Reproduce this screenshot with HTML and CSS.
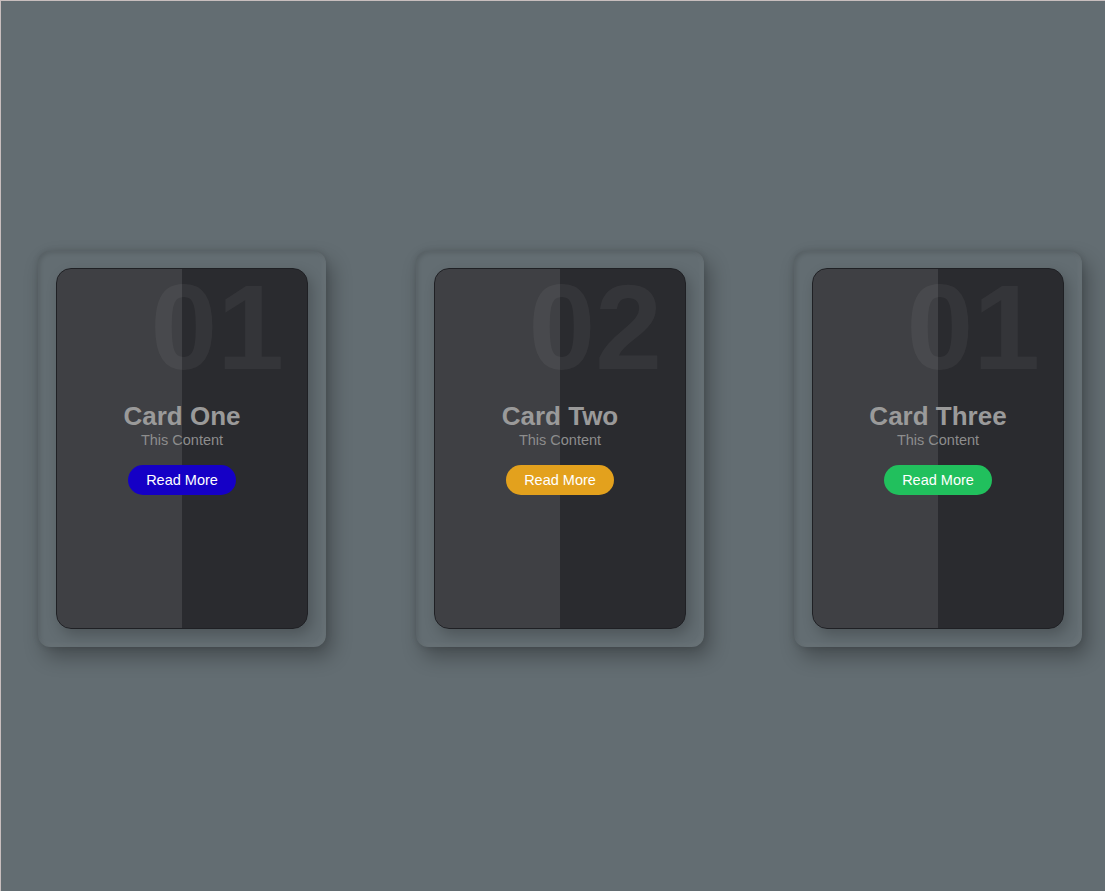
FILE: index.html
```html
<!DOCTYPE html>
<html lang="en">
<head>
<meta charset="UTF-8">
<title>Cards</title>
<link rel="stylesheet" href="styles.css">
</head>
<body>
<main class="page">
  <div class="frame">
    <div class="card">
      <span class="num">01</span>
      <h3 class="title">Card One</h3>
      <p class="sub">This Content</p>
      <a class="btn btn-blue" href="#">Read More</a>
    </div>
  </div>
  <div class="frame">
    <div class="card">
      <span class="num">02</span>
      <h3 class="title">Card Two</h3>
      <p class="sub">This Content</p>
      <a class="btn btn-orange" href="#">Read More</a>
    </div>
  </div>
  <div class="frame">
    <div class="card">
      <span class="num">01</span>
      <h3 class="title">Card Three</h3>
      <p class="sub">This Content</p>
      <a class="btn btn-green" href="#">Read More</a>
    </div>
  </div>
</main>
</body>
</html>
```

FILE: styles.css
```css
html {
  background: #636d72;
  border-left: 1px solid #c8bebe;
  border-top: 1px solid #c8bebe;
}
body {
  margin: 0;
  font-family: "Liberation Sans", Arial, sans-serif;
}
.page {
  display: flex;
  align-items: flex-start;
  gap: 90px;
  padding: 250px 0 0 37px;
  min-height: 890px;
  box-sizing: border-box;
  overflow: hidden;
}
.frame {
  flex: 0 0 auto;
  width: 288px;
  height: 396px;
  box-sizing: border-box;
  padding: 17px 18px 18px 18px;
  border-radius: 12px;
  background: #636d72;
  box-shadow:
    inset 2px 2px 4px rgba(0,0,0,0.12),
    inset -2px -2px 6px rgba(255,255,255,0.05),
    0 0 6px rgba(0,0,0,0.12),
    6px 10px 20px rgba(0,0,0,0.3);
}
.card {
  position: relative;
  height: 100%;
  box-sizing: border-box;
  border: 1px solid #1f2024;
  border-radius: 15px;
  background: linear-gradient(to right, #3f4044 50%, #2a2b2f 50%);
  display: flex;
  flex-direction: column;
  align-items: center;
  justify-content: center;
  box-shadow: 4px 6px 14px rgba(0,0,0,0.22);
}
.num {
  position: absolute;
  top: 8px;
  right: 23px;
  font-size: 120px;
  font-weight: bold;
  line-height: 100px;
  color: rgba(255,255,255,0.05);
}
.title {
  margin: 0;
  font-size: 26px;
  line-height: 29px;
  font-weight: bold;
  color: #9a9a9a;
}
.sub {
  margin: 0;
  font-size: 14.5px;
  line-height: 18px;
  color: #8d8d8d;
}
.btn {
  margin-top: 16px;
  display: inline-block;
  height: 30px;
  line-height: 30px;
  padding: 0 18px;
  border-radius: 15px;
  font-size: 14.5px;
  color: #fff;
  text-decoration: none;
}
.btn-blue { background: #1500c6; }
.btn-orange { background: #e3a11d; }
.btn-green { background: #21c05d; }
```
